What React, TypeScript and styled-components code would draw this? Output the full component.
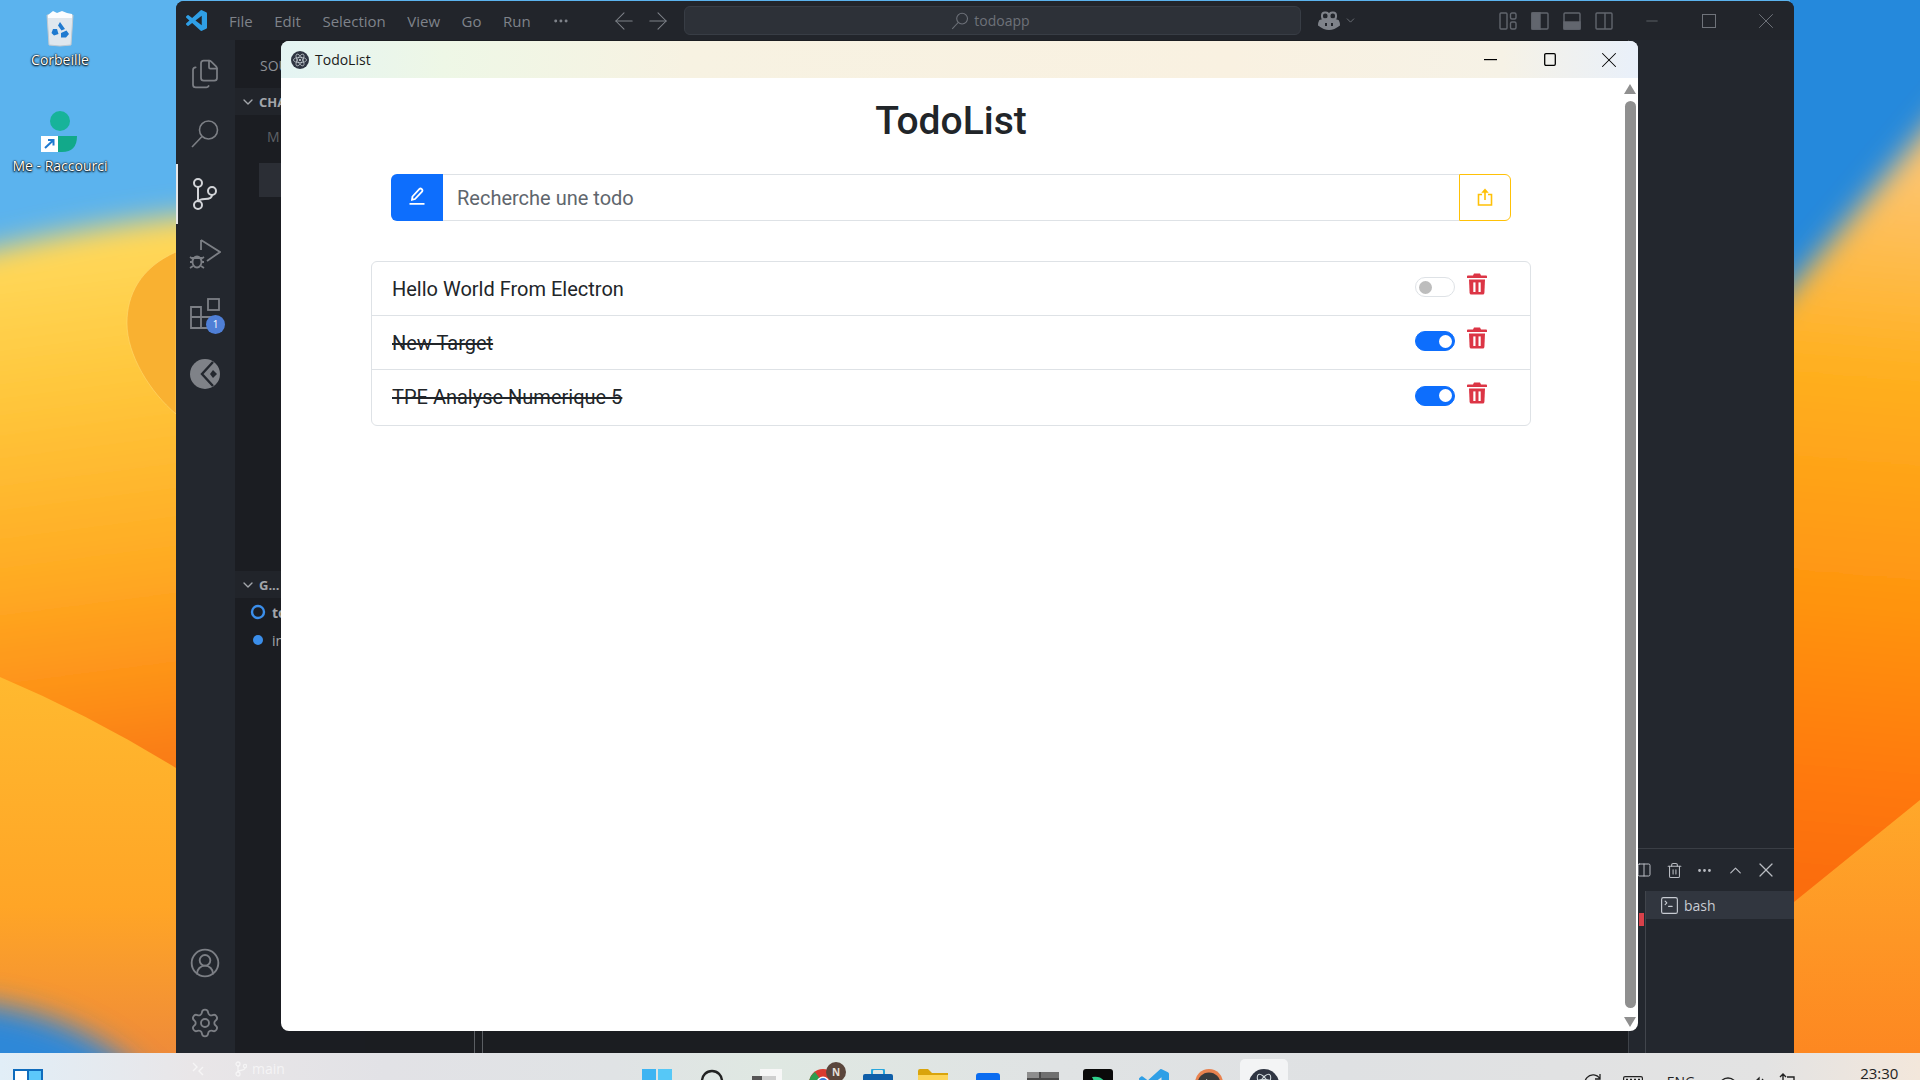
import React from 'react'
import styled, { createGlobalStyle } from 'styled-components'
import {
  ArrowLeft,
  ArrowRight,
  ChevronDown,
  ChevronUp,
  CircleUserRound,
  Columns2,
  Ellipsis,
  Files,
  Minus,
  Settings,
  SquareTerminal,
  Trash2,
  X,
} from 'lucide-react'

const GlobalStyle = createGlobalStyle`
  html, body {
    margin: 0;
    padding: 0;
    width: 1920px;
    height: 1080px;
    overflow: hidden;
    font-family: "Open Sans", "Liberation Sans", sans-serif;
  }
  * {
    box-sizing: border-box;
  }
`

const Desktop = styled.div`
  position: relative;
  width: 1920px;
  height: 1080px;
  overflow: hidden;
`

const WallpaperSvg = styled.svg`
  position: absolute;
  left: 0;
  top: 0;
`

// Desktop shortcuts
const DesktopIcon = styled.div<{ $top: number }>`
  position: absolute;
  left: 0;
  top: ${(props) => props.$top}px;
  width: 120px;
  display: flex;
  flex-direction: column;
  align-items: center;
  gap: 3px;
`

const DesktopLabel = styled.span`
  font-size: 14px;
  line-height: 19px;
  color: #fff;
  text-shadow: 0 1px 2px #000, 0 0 2px #000, 0 0 1px #000;
  white-space: nowrap;
`

// VS Code window behind
const CodeWindow = styled.div`
  position: absolute;
  left: 176px;
  top: 1px;
  width: 1618px;
  height: 1052px;
  display: flex;
  flex-direction: column;
  background: #23272e;
  border-radius: 8px 8px 0 0;
  overflow: hidden;
`

const CodeTitleBar = styled.div`
  height: 39px;
  flex: none;
  display: flex;
  align-items: center;
  padding-left: 10px;
  background: #22252b;
  color: #7f838a;
  font-size: 14px;
`

const MenuBar = styled.div`
  width: 341px;
  flex: none;
  display: flex;
  align-items: center;
  gap: 21.5px;
  margin-left: 22px;
  font-size: 15px;
`

const ArrowGroup = styled.div`
  display: flex;
  align-items: center;
  gap: 6px;
  margin-left: 40px;
  color: #7f838a;
`

const CommandCenter = styled.div`
  width: 617px;
  height: 29px;
  flex: none;
  margin-left: 12px;
  display: flex;
  align-items: center;
  justify-content: center;
  gap: 5px;
  padding-right: 4px;
  background: #2d3138;
  border: 1px solid #383d45;
  border-radius: 6px;
  color: #6d7179;
`

const CopilotGroup = styled.div`
  display: flex;
  align-items: center;
  gap: 4px;
  margin-left: 17px;
  color: #7f838a;
`

const LayoutGroup = styled.div`
  display: flex;
  align-items: center;
  gap: 14px;
  margin-left: 142px;
`

const CodeControls = styled.div`
  display: flex;
  margin-left: auto;
  color: #6f737a;
`

const CodeControl = styled.div`
  width: 57px;
  height: 39px;
  display: flex;
  align-items: center;
  justify-content: center;
`

const CodeBody = styled.div`
  flex: 1;
  display: flex;
  min-height: 0;
`

const ActivityBar = styled.div`
  width: 59px;
  flex: none;
  display: flex;
  flex-direction: column;
  padding-top: 4px;
  background: #23272e;
`

const ActivityItem = styled.div<{ $active?: boolean }>`
  position: relative;
  height: 60px;
  flex: none;
  display: flex;
  align-items: center;
  justify-content: center;
  color: ${(props) => (props.$active ? '#d2d4d8' : '#7c7f85')};
  border-left: 2px solid ${(props) => (props.$active ? '#e8e8e8' : 'transparent')};
  padding-right: 3px;
`

const ActivitySpacer = styled.div`
  flex: 1;
`

const Badge = styled.span`
  position: absolute;
  left: 28px;
  top: 31px;
  width: 19px;
  height: 19px;
  border-radius: 50%;
  background: #4f7fd6;
  color: #fff;
  font-size: 10px;
  line-height: 19px;
  text-align: center;
`

const Sidebar = styled.div`
  width: 130px;
  flex: none;
  display: flex;
  flex-direction: column;
  background: #1b1d22;
  color: #a3a6ab;
  font-size: 14px;
`

const SidebarTitle = styled.div`
  height: 48px;
  flex: none;
  padding: 16px 0 0 25px;
  line-height: 20px;
  color: #8c8f95;
`

const SectionHeader = styled.div`
  height: 27px;
  flex: none;
  display: flex;
  align-items: center;
  gap: 3px;
  padding-left: 5px;
  background: #21242a;
  font-size: 13px;
  font-weight: 700;
`

const CommitBox = styled.div`
  height: 35px;
  flex: none;
  padding: 12px 0 0 32px;
  line-height: 20px;
  color: #5e6167;
`

const MessageInput = styled.div`
  height: 34px;
  flex: none;
  margin: 13px 0 0 24px;
  background: #2b2e35;
`

const SidebarGap = styled.div`
  flex: 1;
`

const GraphList = styled.div`
  height: 455px;
  flex: none;
  display: flex;
  flex-direction: column;
  padding: 0 0 0 15px;
`

const GraphRow = styled.div<{ $bold?: boolean }>`
  height: 28px;
  display: flex;
  align-items: center;
  gap: 6px;
  font-weight: ${(props) => (props.$bold ? 700 : 400)};
`

const EditorArea = styled.div`
  flex: 1;
  position: relative;
  background: #1b1d21;
`

const ScrollStub = styled.div`
  position: absolute;
  left: 109px;
  bottom: 0;
  width: 9px;
  height: 23px;
  border: 1px solid #5b5e63;
  border-bottom: none;
`

const RightColumn = styled.div`
  width: 166px;
  flex: none;
  display: flex;
  flex-direction: column;
  background: #23272e;
  border-left: 1px solid #3f4349;
`

const RightTop = styled.div`
  height: 808px;
  flex: none;
`

const PanelHeader = styled.div`
  height: 43px;
  flex: none;
  display: flex;
  justify-content: flex-end;
  align-items: center;
  padding-right: 13px;
  color: #b9bcc2;
  border-top: 1px solid #3a3e45;
`

const PanelButton = styled.div`
  width: 31px;
  display: flex;
  justify-content: center;
`

const TerminalList = styled.div`
  position: relative;
  flex: 1;
  margin-left: 16px;
  border-left: 1px solid #41454c;
`

const TerminalRow = styled.div`
  height: 28px;
  display: flex;
  align-items: center;
  gap: 4px;
  padding-left: 13px;
  background: #31363f;
  color: #c8ccd3;
  font-size: 14px;
`

const ErrorMark = styled.div`
  position: absolute;
  left: -7px;
  top: 22px;
  width: 5px;
  height: 13px;
  background: #d8414a;
`

// Todo app window
const TodoWindow = styled.div`
  position: absolute;
  left: 281px;
  top: 41px;
  width: 1357px;
  height: 990px;
  display: flex;
  flex-direction: column;
  background: #fff;
  border-radius: 8px;
  overflow: hidden;
`

const TodoTitleBar = styled.div`
  height: 37px;
  flex: none;
  display: flex;
  align-items: center;
  padding-left: 10px;
  gap: 6px;
  background: linear-gradient(90deg, #e4f4f3 0%, #eef7e6 12%, #f7f2e2 30%, #f9f1e1 70%, #f6f2e6 90%, #e9f0fa 100%);
  color: #1b1b1b;
  font-size: 14px;
`

const WindowButtons = styled.div`
  display: flex;
  margin-left: auto;
  color: #000;
`

const WindowButton = styled.div`
  width: 59px;
  height: 37px;
  display: flex;
  align-items: center;
  justify-content: center;
`

const TodoBody = styled.div`
  flex: 1;
  display: flex;
  min-height: 0;
`

const Content = styled.main`
  flex: 1;
  display: flex;
  flex-direction: column;
  align-items: center;
  padding-top: 19px;
`

const Heading = styled.h1`
  margin: 0 0 29px;
  font-family: Roboto, "Liberation Sans", sans-serif;
  font-size: 39px;
  line-height: 48px;
  font-weight: 500;
  color: #212529;
`

const InputGroup = styled.div`
  width: 1120px;
  height: 47px;
  flex: none;
  display: flex;
  margin-bottom: 40px;
`

const AddButton = styled.button`
  width: 52px;
  flex: none;
  display: flex;
  align-items: center;
  justify-content: center;
  padding: 0 0 3px;
  background: #0d6efd;
  border: none;
  border-radius: 6px 0 0 6px;
`

const SearchInput = styled.input`
  flex: 1;
  min-width: 0;
  padding: 0 14px;
  font-family: Roboto, "Liberation Sans", sans-serif;
  font-size: 20px;
  color: #212529;
  background: #fff;
  border: 1px solid #dee2e6;
  border-left: none;
  border-right: none;
  outline: none;
  &::placeholder {
    color: #5f666d;
    opacity: 1;
  }
`

const ShareButton = styled.button`
  width: 52px;
  flex: none;
  display: flex;
  align-items: center;
  justify-content: center;
  padding: 0 0 1px;
  background: #fff;
  border: 1px solid #ffc107;
  border-radius: 0 6px 6px 0;
`

const TodoList = styled.ul`
  width: 1160px;
  margin: 0;
  padding: 0;
  list-style: none;
  border: 1px solid #dee2e6;
  border-radius: 6px;
`

const TodoRow = styled.li`
  height: 54.2px;
  display: flex;
  align-items: center;
  padding: 0 43px 0 20px;
  border-bottom: 1px solid #dee2e6;
  &:last-child {
    border-bottom: none;
  }
`

const TodoText = styled.span<{ $done?: boolean }>`
  flex: 1;
  font-family: Roboto, "Liberation Sans", sans-serif;
  font-size: 20px;
  color: #212529;
  text-decoration: ${(props) => (props.$done ? 'line-through' : 'none')};
`

const Switch = styled.span<{ $on?: boolean }>`
  position: relative;
  width: 40px;
  height: 20px;
  flex: none;
  margin: -3px 12px 0 0;
  border-radius: 10px;
  background: ${(props) => (props.$on ? '#0d6efd' : '#fff')};
  border: 1px solid ${(props) => (props.$on ? '#0d6efd' : '#dee2e6')};
  &::after {
    content: '';
    position: absolute;
    top: 2.5px;
    left: ${(props) => (props.$on ? '23px' : '2.5px')};
    width: 13px;
    height: 13px;
    border-radius: 50%;
    background: ${(props) => (props.$on ? '#fff' : '#bdbdbd')};
  }
`

const TrashButton = styled.span`
  width: 20px;
  height: 22px;
  flex: none;
  margin-top: -9px;
  display: flex;
`

const ScrollTrack = styled.div`
  width: 17px;
  flex: none;
  display: flex;
  flex-direction: column;
  align-items: center;
  padding: 6px 0 4px 1px;
  color: #8f8f8f;
`

const ScrollThumb = styled.div`
  flex: 1;
  width: 11px;
  margin: 7px 0 9px;
  background: #8f8f8f;
  border-radius: 6px;
`

// Taskbar, cropped by the bottom of the shot
const Taskbar = styled.div`
  position: absolute;
  left: 0;
  bottom: 0;
  width: 1920px;
  height: 27px;
  display: flex;
  padding-left: 13px;
  overflow: hidden;
  background: linear-gradient(90deg, #e1eef7 0%, #e9e6e8 10%, #e2e2e6 20%, #e0e3e5 32%, #dfe8e2 40%, #e0e3e4 55%, #dfe1e3 70%, #e3e3e3 92%, #f3e7db 100%);
`

const StartIcon = styled.div`
  width: 30px;
  flex: none;
  padding-top: 16px;
`

const TaskIcons = styled.div`
  display: flex;
  flex: none;
  margin-left: 586.4px;
`

const TaskIcon = styled.div<{ $selected?: boolean }>`
  position: relative;
  width: 55.2px;
  height: 27px;
  display: flex;
  justify-content: center;
  padding-top: 16px;
  &::before {
    content: '';
    display: ${(props) => (props.$selected ? 'block' : 'none')};
    position: absolute;
    left: 4px;
    right: 4px;
    top: 6px;
    bottom: -10px;
    background: #f3f4f5;
    border-radius: 5px;
  }
  svg {
    position: relative;
  }
`

const NotifyBadge = styled.span`
  position: absolute;
  left: 31px;
  top: 9px;
  width: 20px;
  height: 20px;
  border-radius: 50%;
  background: #5a463c;
  color: #e6e0dc;
  font-size: 10px;
  font-weight: 700;
  line-height: 20px;
  text-align: center;
`

const Tray = styled.div`
  display: flex;
  flex: none;
  margin-left: 260px;
  color: #222;
  font-size: 14px;
`

const TrayItem = styled.div<{ $ml: number; $pt?: number }>`
  margin-left: ${(props) => props.$ml}px;
  padding-top: ${(props) => props.$pt ?? 24}px;
  line-height: 18px;
`

const Clock = styled.span`
  display: block;
  font-size: 15px;
  line-height: 15px;
  color: #222;
`

const GhostStatus = styled.div`
  position: absolute;
  left: 192px;
  top: 6px;
  display: flex;
  align-items: center;
  color: rgba(255, 255, 255, 0.6);
  font-size: 14px;
`

const GhostBranch = styled.span`
  display: flex;
  align-items: center;
  gap: 5px;
  margin-left: 31px;
`

const Mark = ({ d, size = 18, fill = 'currentColor' }: { d: string; size?: number; fill?: string }) => (
  <svg width={size} height={size} viewBox="0 0 24 24" fill={fill}>
    <path d={d} />
  </svg>
)

const VSCODE_PATH =
  'M23.15 2.587L18.21.21a1.494 1.494 0 0 0-1.705.29l-9.46 8.63-4.12-3.128a.999.999 0 0 0-1.276.057L.327 7.261A1 1 0 0 0 .326 8.74L3.899 12 .326 15.26a1 1 0 0 0 .001 1.479L1.65 17.94a.999.999 0 0 0 1.276.057l4.12-3.128 9.46 8.63a1.492 1.492 0 0 0 1.704.29l4.942-2.377A1.5 1.5 0 0 0 24 20.06V3.939a1.5 1.5 0 0 0-.85-1.352zm-5.146 14.861L10.826 12l7.178-5.448v10.896z'

const Wallpaper = () => (
  <WallpaperSvg width="1920" height="1080" viewBox="0 0 1920 1080">
    <defs>
      <linearGradient id="leftSky" gradientUnits="userSpaceOnUse" x1="0" y1="230" x2="70" y2="770">
        <stop offset="0" stopColor="#ffdb60" />
        <stop offset="0.3" stopColor="#ffc73c" />
        <stop offset="0.65" stopColor="#ffaa22" />
        <stop offset="0.9" stopColor="#fd8c16" />
        <stop offset="1" stopColor="#f97c14" />
      </linearGradient>
      <linearGradient id="leftDune" x1="0" y1="0" x2="0" y2="1">
        <stop offset="0" stopColor="#ffb92f" />
        <stop offset="0.6" stopColor="#ffa526" />
        <stop offset="1" stopColor="#ee8a3a" />
      </linearGradient>
      <linearGradient id="rightSky" gradientUnits="userSpaceOnUse" x1="1900" y1="170" x2="1840" y2="880">
        <stop offset="0" stopColor="#fdc46e" />
        <stop offset="0.28" stopColor="#ffb020" />
        <stop offset="0.6" stopColor="#ff9510" />
        <stop offset="0.85" stopColor="#ff7a06" />
        <stop offset="1" stopColor="#fb6d10" />
      </linearGradient>
      <linearGradient id="rightDune" x1="0" y1="0" x2="0" y2="1">
        <stop offset="0" stopColor="#ffa82a" />
        <stop offset="1" stopColor="#fd8420" />
      </linearGradient>
      <filter id="soft" x="-30%" y="-30%" width="160%" height="160%">
        <feGaussianBlur stdDeviation="14" />
      </filter>
    </defs>
    <rect width="1920" height="1080" fill="#5bb3ee" />
    {/* left side */}
    <path d="M-80 267 C 40 237 120 217 300 205 L300 900 L-80 900 Z" fill="url(#leftSky)" filter="url(#soft)" />
    <path d="M176 252 C 140 268 127 295 127 323 C 127 355 150 392 176 414 Z" fill="#f9b131" stroke="#ffe07a" strokeOpacity="0.5" />
    <path d="M0 677 Q 90 715 176 768 L176 1060 L0 1060 Z" fill="url(#leftDune)" />
    <path d="M-50 1000 C 40 1005 110 1035 160 1095 L-50 1095 Z" fill="#2f88d8" filter="url(#soft)" />
    {/* right side */}
    <rect x="1790" width="130" height="1080" fill="#2589dc" />
    <path d="M1760 325 L1960 88 L1960 1100 L1760 1100 Z" fill="url(#rightSky)" filter="url(#soft)" />
    <path d="M1794 902 L1920 800 L1920 1080 L1794 1080 Z" fill="url(#rightDune)" />
  </WallpaperSvg>
)

const RecycleBin = () => (
  <svg width="30" height="37" viewBox="0 0 30 37" style={{ marginTop: 10 }}>
    <path d="M2 5 L28 5 L26 35 Q15 37 4 35 Z" fill="#dfe7ee" stroke="#bfc9d1" />
    <path d="M3 5 L8 1 L12 3 L17 1 L22 3 L27 4 L27 8 L3 8 Z" fill="#fbfdff" />
    <path d="M15 12 L20 19 L16.5 20.5 L13 15.5 Z M8 19 L12 19 L13.5 24 L9 25.5 L6.5 23 Z M21.5 20.5 L24 24 L21 27.5 L16 27.5 L16 23 Z" fill="#1f7ad0" />
  </svg>
)

const MeIcon = () => (
  <svg width="40" height="42" viewBox="0 0 40 42">
    <circle cx="20" cy="10" r="10" fill="#17b39a" />
    <path d="M18 25 L37 25 Q37 41 22 41 L18 41 Z" fill="#12a98a" />
    <rect x="1" y="25" width="17" height="16" fill="#fff" />
    <path d="M5 37 L13 29.5 M8 29 L13.5 29 L13.5 34.5" fill="none" stroke="#1f7ad0" strokeWidth="2" />
  </svg>
)

const FlippedSearch = ({ size = 30, stroke = 1.6 }: { size?: number; stroke?: number }) => (
  <svg width={size} height={size} viewBox="0 0 30 30" fill="none" stroke="currentColor" strokeWidth={stroke}>
    <circle cx="18.5" cy="11" r="9" />
    <path d="M12 17.5 L2 28" />
  </svg>
)

const SourceControlIcon = () => (
  <svg width="26" height="32" viewBox="0 0 26 32" fill="none" stroke="currentColor" strokeWidth="2">
    <circle cx="6" cy="5" r="4" />
    <circle cx="6" cy="27" r="4" />
    <circle cx="20" cy="13" r="4" />
    <path d="M6 9 V23 M20 17 Q20 21 13 21 Q7 21 6 24" />
  </svg>
)

const DebugIcon = () => (
  <svg width="32" height="32" viewBox="0 0 32 32" fill="none" stroke="currentColor" strokeWidth="1.8">
    <path d="M12 2 L31 14 L18 23 M12 2 V12" />
    <ellipse cx="8" cy="24" rx="4.5" ry="5.5" />
    <path d="M1 19 L4 21 M1 24 H3.5 M1 30 L4 28 M15 19 L12 21 M15 24 H12.5 M15 30 L12 28 M3 20 H13" />
  </svg>
)

const ExtensionsIcon = () => (
  <svg width="31" height="32" viewBox="0 0 31 32" fill="none" stroke="currentColor" strokeWidth="1.8">
    <path d="M1 9 H11 V19 H21 V30 H1 Z M1 19 H11 V30" />
    <rect x="18" y="1" width="11" height="11" />
  </svg>
)

const GitLensIcon = () => (
  <svg width="30" height="30" viewBox="0 0 30 30">
    <circle cx="15" cy="15" r="15" fill="#7f8288" />
    <path d="M23 3 L12 15 L23 27" fill="none" stroke="#23272e" strokeWidth="2.4" />
    <path d="M23 11 L27 15 L23 19 L20 15 Z" fill="#23272e" />
  </svg>
)

const CopilotIcon = () => (
  <svg width="22" height="20" viewBox="0 0 22 20" fill="none" stroke="currentColor" strokeWidth="2">
    <rect x="4" y="1.5" width="6.5" height="7" rx="3" />
    <rect x="11.5" y="1.5" width="6.5" height="7" rx="3" />
    <path d="M2 10 Q1 12 1 14 Q11 22 21 14 Q21 12 20 10 Q11 6 2 10 Z" fill="currentColor" />
    <path d="M8 12 V15 M14 12 V15" stroke="#22252b" />
  </svg>
)

const LayoutIcon = ({ variant }: { variant: 'custom' | 'left' | 'bottom' | 'right' }) => (
  <svg width="18" height="18" viewBox="0 0 18 18" fill="none" stroke="#62666e" strokeWidth="1.4">
    {variant === 'custom' && (
      <>
        <rect x="1" y="1" width="7" height="16" rx="1" />
        <rect x="11.5" y="1" width="5.5" height="6" rx="1.5" />
        <rect x="11.5" y="10" width="5.5" height="7" rx="1.5" />
      </>
    )}
    {variant === 'left' && (
      <>
        <rect x="1" y="1" width="16" height="16" rx="1" />
        <rect x="1" y="1" width="8" height="16" fill="#62666e" />
      </>
    )}
    {variant === 'bottom' && (
      <>
        <rect x="1" y="1" width="16" height="16" rx="1" />
        <rect x="1" y="10" width="16" height="7" fill="#62666e" />
      </>
    )}
    {variant === 'right' && (
      <>
        <rect x="1" y="1" width="16" height="16" rx="1" />
        <path d="M10 1 V17" />
      </>
    )}
  </svg>
)

const ElectronIcon = ({ size = 18 }: { size?: number }) => (
  <svg width={size} height={size} viewBox="0 0 30 30">
    <circle cx="15" cy="15" r="15" fill="#2f3542" />
    <g fill="none" stroke="#cfd8dc" strokeWidth="1.1">
      <ellipse cx="15" cy="15" rx="11" ry="4.4" />
      <ellipse cx="15" cy="15" rx="11" ry="4.4" transform="rotate(60 15 15)" />
      <ellipse cx="15" cy="15" rx="11" ry="4.4" transform="rotate(120 15 15)" />
    </g>
    <circle cx="15" cy="15" r="1.6" fill="#e4eaec" />
  </svg>
)

const PencilIcon = () => (
  <svg width="16" height="18" viewBox="0 0 16 18" fill="none" stroke="#fff" strokeWidth="1.8">
    <path d="M3.5 9.5 L10.5 2 Q11.5 1 12.8 2.2 Q14 3.5 13 4.6 L6 12 L3 12.8 Z" />
    <path d="M0.5 16.8 H15.5" strokeWidth="1.8" />
  </svg>
)

const ShareIcon = () => (
  <svg width="16" height="18" viewBox="0 0 16 18" fill="none" stroke="#ffc107" strokeWidth="1.6">
    <path d="M5 6.5 H1.5 V17 H14.5 V6.5 H11" />
    <path d="M8 12 V2" />
    <path d="M4.8 4.6 L8 0.8 L11.2 4.6 Z" fill="#ffc107" strokeWidth="0.6" />
  </svg>
)

const TodoTrash = () => (
  <svg width="20" height="22" viewBox="0 0 20 22">
    <path d="M7 0.6 H13 L14 2.6 H19.2 Q20 2.6 20 3.6 V5 H0 V3.6 Q0 2.6 0.8 2.6 H6 Z" fill="#dc3545" />
    <path d="M2 6.6 H18 L17.4 20 Q17.3 21.6 15.7 21.6 H4.3 Q2.7 21.6 2.6 20 Z" fill="#dc3545" />
    <rect x="6.3" y="9.4" width="2.2" height="9.6" fill="#fff" />
    <rect x="11.5" y="9.4" width="2.2" height="9.6" fill="#fff" />
  </svg>
)

const BranchDot = ({ hollow }: { hollow?: boolean }) => (
  <svg width="16" height="16" viewBox="0 0 16 16">
    {hollow ? (
      <circle cx="8" cy="8" r="6" fill="none" stroke="#3b8eea" strokeWidth="2.4" />
    ) : (
      <circle cx="8" cy="8" r="5" fill="#3b8eea" />
    )}
  </svg>
)

// Taskbar app icons, only their top edge is in the shot
const StartLogo = () => (
  <svg width="30" height="30" viewBox="0 0 30 30">
    <rect x="0" y="0" width="30" height="30" fill="#0f6cbd" />
    <rect x="2" y="2" width="12" height="13" fill="#fff" />
    <rect x="16" y="2" width="12" height="13" fill="#5cc8fa" />
  </svg>
)

const WinLogo = () => (
  <svg width="30" height="30" viewBox="0 0 30 30">
    <rect x="0" y="0" width="14" height="14" fill="#3db4f2" />
    <rect x="16" y="0" width="14" height="14" fill="#56c8f7" />
  </svg>
)

const SearchTask = () => (
  <svg width="24" height="30" viewBox="0 0 24 30" fill="none" stroke="#222" strokeWidth="2.4">
    <circle cx="12" cy="12" r="10" />
  </svg>
)

const CopyTask = () => (
  <svg width="30" height="30" viewBox="0 0 30 30">
    <rect x="8" y="0" width="22" height="22" fill="#f7f7f7" />
    <rect x="0" y="7" width="10" height="10" fill="#555" />
    <rect x="10" y="7" width="14" height="12" fill="#cfcfcf" />
  </svg>
)

const ChromeTask = () => (
  <svg width="28" height="30" viewBox="0 0 28 30">
    <circle cx="14" cy="14" r="14" fill="#d93a30" />
    <path d="M0 14 A14 14 0 0 1 6 3 L14 14 L14 28 A14 14 0 0 1 0 14 Z" fill="#2e9e4e" />
    <circle cx="14" cy="14" r="6.5" fill="#fff" />
    <circle cx="14" cy="14" r="5" fill="#3c78d8" />
  </svg>
)

const StoreTask = () => (
  <svg width="30" height="30" viewBox="0 0 30 30">
    <path d="M9 5 V2 Q9 0 11 0 H19 Q21 0 21 2 V5" fill="none" stroke="#27a6dd" strokeWidth="2" />
    <rect x="0" y="5" width="30" height="25" rx="2" fill="#0e5ea8" />
  </svg>
)

const FolderTask = () => (
  <svg width="30" height="30" viewBox="0 0 30 30">
    <path d="M0 2 Q0 0 2 0 H10 L14 4 H30 V10 H0 Z" fill="#d9a40c" />
    <rect x="0" y="6" width="30" height="24" fill="#fdd559" />
  </svg>
)

const BlueTask = () => (
  <svg width="24" height="30" viewBox="0 0 24 30">
    <rect x="0" y="4" width="24" height="26" rx="3" fill="#0a6cf0" />
  </svg>
)

const TerminalTask = () => (
  <svg width="32" height="30" viewBox="0 0 32 30">
    <rect x="0" y="3" width="32" height="27" fill="#4a4a4a" />
    <rect x="0" y="3" width="12" height="6" fill="#8d8d8d" />
    <rect x="14" y="3" width="18" height="6" fill="#707070" />
  </svg>
)

const BlackTask = () => (
  <svg width="30" height="30" viewBox="0 0 30 30">
    <rect width="30" height="30" rx="3" fill="#0a0a0a" />
    <path d="M9 8 Q20 6 23 16 L18 16 Q17 11 11 12 Z" fill="#2fd08c" />
  </svg>
)

const OrangeTask = () => (
  <svg width="28" height="30" viewBox="0 0 28 30">
    <circle cx="14" cy="14" r="14" fill="#e9824f" />
    <circle cx="14" cy="15" r="11.5" fill="#3b3a3a" />
    <path d="M11 10 L20 16 L11 22 Z" fill="#eee" />
  </svg>
)

const App = () => (
  <Desktop>
    <GlobalStyle />
    <Wallpaper />

    <DesktopIcon $top={0}>
      <RecycleBin />
      <DesktopLabel>Corbeille</DesktopLabel>
    </DesktopIcon>
    <DesktopIcon $top={111}>
      <MeIcon />
      <DesktopLabel>Me - Raccourci</DesktopLabel>
    </DesktopIcon>

    <CodeWindow>
      <CodeTitleBar>
        <Mark d={VSCODE_PATH} size={21} fill="#2f9fe6" />
        <MenuBar>
          <span>File</span>
          <span>Edit</span>
          <span>Selection</span>
          <span>View</span>
          <span>Go</span>
          <span>Run</span>
          <Ellipsis size={18} />
        </MenuBar>
        <ArrowGroup>
          <ArrowLeft size={28} strokeWidth={0.9} />
          <ArrowRight size={28} strokeWidth={0.9} />
        </ArrowGroup>
        <CommandCenter>
          <FlippedSearch size={18} stroke={1.8} />
          <span>todoapp</span>
        </CommandCenter>
        <CopilotGroup>
          <CopilotIcon />
          <ChevronDown size={13} strokeWidth={1.4} />
        </CopilotGroup>
        <LayoutGroup>
          <LayoutIcon variant="custom" />
          <LayoutIcon variant="left" />
          <LayoutIcon variant="bottom" />
          <LayoutIcon variant="right" />
        </LayoutGroup>
        <CodeControls>
          <CodeControl>
            <Minus size={18} strokeWidth={1} />
          </CodeControl>
          <CodeControl>
            <svg width="14" height="14" viewBox="0 0 14 14" fill="none" stroke="currentColor">
              <rect x="0.5" y="0.5" width="13" height="13" />
            </svg>
          </CodeControl>
          <CodeControl>
            <X size={26} strokeWidth={0.9} />
          </CodeControl>
        </CodeControls>
      </CodeTitleBar>

      <CodeBody>
        <ActivityBar>
          <ActivityItem>
            <Files size={32} strokeWidth={1.3} />
          </ActivityItem>
          <ActivityItem>
            <FlippedSearch />
          </ActivityItem>
          <ActivityItem $active>
            <SourceControlIcon />
          </ActivityItem>
          <ActivityItem>
            <DebugIcon />
          </ActivityItem>
          <ActivityItem>
            <ExtensionsIcon />
            <Badge>1</Badge>
          </ActivityItem>
          <ActivityItem>
            <GitLensIcon />
          </ActivityItem>
          <ActivitySpacer />
          <ActivityItem>
            <CircleUserRound size={32} strokeWidth={1.4} />
          </ActivityItem>
          <ActivityItem>
            <Settings size={32} strokeWidth={1.4} />
          </ActivityItem>
        </ActivityBar>

        <Sidebar>
          <SidebarTitle>SOU</SidebarTitle>
          <SectionHeader>
            <ChevronDown size={16} />
            <span>CHA</span>
          </SectionHeader>
          <CommitBox>M</CommitBox>
          <MessageInput />
          <SidebarGap />
          <SectionHeader>
            <ChevronDown size={16} />
            <span>G...</span>
          </SectionHeader>
          <GraphList>
            <GraphRow $bold>
              <BranchDot hollow />
              <span>to</span>
            </GraphRow>
            <GraphRow>
              <BranchDot />
              <span>in</span>
            </GraphRow>
          </GraphList>
        </Sidebar>

        <EditorArea>
          <ScrollStub />
        </EditorArea>

        <RightColumn>
          <RightTop />
          <PanelHeader>
            <PanelButton>
              <Columns2 size={16} strokeWidth={1.5} />
            </PanelButton>
            <PanelButton>
              <Trash2 size={17} strokeWidth={1.5} />
            </PanelButton>
            <PanelButton>
              <Ellipsis size={17} />
            </PanelButton>
            <PanelButton>
              <ChevronUp size={19} strokeWidth={1.5} />
            </PanelButton>
            <PanelButton>
              <X size={24} strokeWidth={1.2} />
            </PanelButton>
          </PanelHeader>
          <TerminalList>
            <TerminalRow>
              <SquareTerminal size={21} strokeWidth={1.3} />
              <span>bash</span>
            </TerminalRow>
            <ErrorMark />
          </TerminalList>
        </RightColumn>
      </CodeBody>
    </CodeWindow>

    <TodoWindow>
      <TodoTitleBar>
        <ElectronIcon />
        <span>TodoList</span>
        <WindowButtons>
          <WindowButton>
            <svg width="13" height="2" viewBox="0 0 13 2">
              <rect width="13" height="1.2" fill="currentColor" />
            </svg>
          </WindowButton>
          <WindowButton>
            <svg width="12" height="13" viewBox="0 0 12 13" fill="none" stroke="currentColor" strokeWidth="1.3">
              <rect x="0.7" y="0.7" width="10.6" height="11.6" rx="1.2" />
            </svg>
          </WindowButton>
          <WindowButton>
            <X size={26} strokeWidth={0.95} />
          </WindowButton>
        </WindowButtons>
      </TodoTitleBar>

      <TodoBody>
        <Content>
          <Heading>TodoList</Heading>
          <InputGroup>
            <AddButton>
              <PencilIcon />
            </AddButton>
            <SearchInput placeholder="Recherche une todo" />
            <ShareButton>
              <ShareIcon />
            </ShareButton>
          </InputGroup>
          <TodoList>
            <TodoRow>
              <TodoText>Hello World From Electron</TodoText>
              <Switch />
              <TrashButton>
                <TodoTrash />
              </TrashButton>
            </TodoRow>
            <TodoRow>
              <TodoText $done>New Target</TodoText>
              <Switch $on />
              <TrashButton>
                <TodoTrash />
              </TrashButton>
            </TodoRow>
            <TodoRow>
              <TodoText $done>TPE Analyse Numerique 5</TodoText>
              <Switch $on />
              <TrashButton>
                <TodoTrash />
              </TrashButton>
            </TodoRow>
          </TodoList>
        </Content>
        <ScrollTrack>
          <svg width="12" height="10" viewBox="0 0 12 10">
            <path d="M6 0 L12 10 H0 Z" fill="currentColor" />
          </svg>
          <ScrollThumb />
          <svg width="12" height="10" viewBox="0 0 12 10">
            <path d="M0 0 H12 L6 10 Z" fill="currentColor" />
          </svg>
        </ScrollTrack>
      </TodoBody>
    </TodoWindow>

    <Taskbar>
      <GhostStatus>
        <svg width="12" height="14" viewBox="0 0 12 14" fill="none" stroke="currentColor" strokeWidth="1.4">
          <path d="M1 1 L5 5 L1 9 M11 5 L7 9 L11 13" />
        </svg>
        <GhostBranch>
          <svg width="12" height="16" viewBox="0 0 12 16" fill="none" stroke="currentColor" strokeWidth="1.3">
            <circle cx="3" cy="3" r="2" />
            <circle cx="3" cy="13" r="2" />
            <circle cx="10" cy="5" r="1.6" />
            <path d="M3 5 V11 M10 7 Q10 9 3 10" />
          </svg>
          <span>main</span>
        </GhostBranch>
      </GhostStatus>
      <StartIcon>
        <StartLogo />
      </StartIcon>
      <TaskIcons>
        <TaskIcon>
          <WinLogo />
        </TaskIcon>
        <TaskIcon>
          <SearchTask />
        </TaskIcon>
        <TaskIcon>
          <CopyTask />
        </TaskIcon>
        <TaskIcon>
          <ChromeTask />
          <NotifyBadge>N</NotifyBadge>
        </TaskIcon>
        <TaskIcon>
          <StoreTask />
        </TaskIcon>
        <TaskIcon>
          <FolderTask />
        </TaskIcon>
        <TaskIcon>
          <BlueTask />
        </TaskIcon>
        <TaskIcon>
          <TerminalTask />
        </TaskIcon>
        <TaskIcon>
          <BlackTask />
        </TaskIcon>
        <TaskIcon>
          <Mark d={VSCODE_PATH} size={30} fill="#2f9fe6" />
        </TaskIcon>
        <TaskIcon>
          <OrangeTask />
        </TaskIcon>
        <TaskIcon $selected>
          <ElectronIcon size={30} />
        </TaskIcon>
      </TaskIcons>
      <Tray>
        <TrayItem $ml={0} $pt={24}>
          <ChevronUp size={10} />
        </TrayItem>
        <TrayItem $ml={21} $pt={20}>
          <svg width="20" height="20" viewBox="0 0 20 20" fill="none" stroke="#222" strokeWidth="1.3">
            <path d="M17 6 A8 8 0 1 0 18 10 M17 1 V6 H12" />
          </svg>
        </TrayItem>
        <TrayItem $ml={20} $pt={23}>
          <svg width="20" height="16" viewBox="0 0 20 16" fill="none" stroke="#222" strokeWidth="1.2">
            <rect x="0.6" y="0.6" width="18.8" height="14" rx="1.5" />
            <path d="M3 3.5 H5 M7 3.5 H9 M11 3.5 H13 M15 3.5 H17" strokeWidth="1.4" />
          </svg>
        </TrayItem>
        <TrayItem $ml={24} $pt={20}>ENG</TrayItem>
        <TrayItem $ml={23}>
          <svg width="20" height="20" viewBox="0 0 20 20" fill="none" stroke="#222" strokeWidth="1.3">
            <circle cx="10" cy="10" r="9" />
          </svg>
        </TrayItem>
        <TrayItem $ml={12} $pt={22}>
          <svg width="18" height="20" viewBox="0 0 18 20" fill="none" stroke="#222" strokeWidth="1.3">
            <path d="M1 8 H4 L9 3 V14 M12 4 Q15 7 15 11" />
          </svg>
        </TrayItem>
        <TrayItem $ml={10} $pt={20}>
          <svg width="18" height="20" viewBox="0 0 18 20" fill="none" stroke="#222" strokeWidth="1.4">
            <path d="M5 1 V10 M2 4 L5 1 L8 4 M9 4 H16 V12" />
          </svg>
        </TrayItem>
        <TrayItem $ml={64} $pt={13}>
          <Clock>23:30</Clock>
        </TrayItem>
      </Tray>
    </Taskbar>
  </Desktop>
)

export default App
